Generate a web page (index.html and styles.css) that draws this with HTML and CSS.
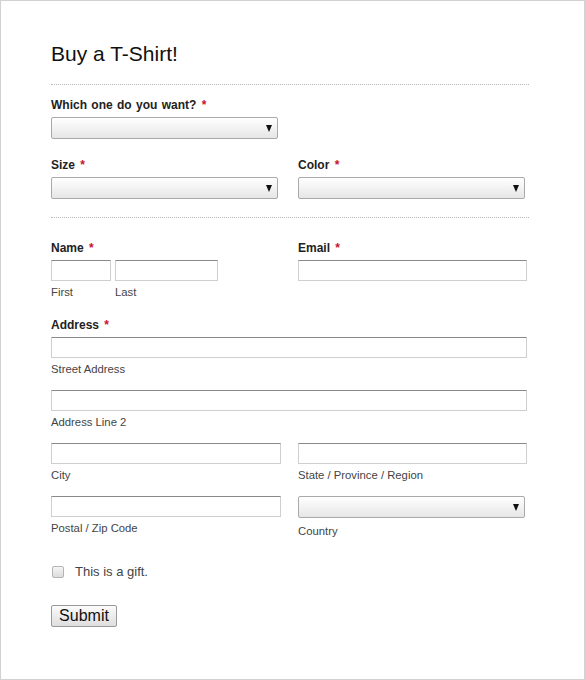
FILE: index.html
```html
<!DOCTYPE html>
<html>
<head>
<meta charset="utf-8">
<title>Buy a T-Shirt!</title>
<link rel="stylesheet" href="styles.css">
</head>
<body>
<div class="page">
  <h1 class="title">Buy a T-Shirt!</h1>
  <hr class="sep">

  <div class="field f-which">
    <label class="lbl">Which one do you want? <span class="req">*</span></label>
    <div class="select"><select><option></option></select></div>
  </div>

  <div class="grid f-size">
    <div class="field">
      <label class="lbl">Size <span class="req">*</span></label>
      <div class="select"><select><option></option></select></div>
    </div>
    <div class="field">
      <label class="lbl">Color <span class="req">*</span></label>
      <div class="select"><select><option></option></select></div>
    </div>
  </div>

  <hr class="sep sep2">

  <div class="grid f-name">
    <div class="field">
      <label class="lbl">Name <span class="req">*</span></label>
      <div class="name-row">
        <div class="sub-field">
          <input class="txt w-first" type="text">
          <span class="sub">First</span>
        </div>
        <div class="sub-field">
          <input class="txt w-last" type="text">
          <span class="sub">Last</span>
        </div>
      </div>
    </div>
    <div class="field">
      <label class="lbl">Email <span class="req">*</span></label>
      <input class="txt w-full" type="text">
    </div>
  </div>

  <div class="field f-address">
    <label class="lbl">Address <span class="req">*</span></label>
    <input class="txt w-wide" type="text">
    <span class="sub">Street Address</span>
  </div>

  <div class="field f-line2">
    <input class="txt w-wide" type="text">
    <span class="sub">Address Line 2</span>
  </div>

  <div class="grid f-city">
    <div class="field">
      <input class="txt w-full" type="text">
      <span class="sub">City</span>
    </div>
    <div class="field">
      <input class="txt w-full" type="text">
      <span class="sub">State / Province / Region</span>
    </div>
  </div>

  <div class="grid f-postal">
    <div class="field">
      <input class="txt w-full" type="text">
      <span class="sub">Postal / Zip Code</span>
    </div>
    <div class="field">
      <div class="select"><select><option></option></select></div>
      <span class="sub sub-country">Country</span>
    </div>
  </div>

  <label class="gift">
    <input class="check" type="checkbox">
    <span>This is a gift.</span>
  </label>

  <button class="submit" type="button">Submit</button>
</div>
</body>
</html>
```

FILE: styles.css
```css
html, body {
  margin: 0;
  padding: 0;
  background: #fff;
}

.page {
  box-sizing: border-box;
  width: 585px;
  height: 680px;
  border: 1px solid #d2d2d2;
  padding: 41px 0 0 50px;
  font-family: "Liberation Sans", Arial, sans-serif;
  color: #222;
}

.title {
  margin: 0;
  font-size: 21px;
  line-height: 23px;
  font-weight: normal;
  color: #111;
}

.sep {
  margin: 19px 0 0 0;
  width: 478px;
  height: 0;
  border: 0;
  border-top: 1px dotted #b8b8b8;
}

.sep2 {
  margin-top: 18px;
}

.field {
  display: flex;
  flex-direction: column;
  align-items: flex-start;
}

.lbl {
  display: block;
  font-size: 12px;
  line-height: 16px;
  font-weight: bold;
  word-spacing: 1px;
  color: #222;
  margin-bottom: 4px;
}

.req {
  color: #c8102e;
  margin-left: 1px;
}

.grid {
  display: grid;
  grid-template-columns: 230px 229px;
  column-gap: 17px;
  align-items: start;
}

.f-which { margin-top: 12px; }
.f-size { margin-top: 18px; }
.f-name { margin-top: 22px; }
.f-address { margin-top: 18px; }
.f-line2 { margin-top: 14px; }
.f-city { margin-top: 14px; }
.f-postal { margin-top: 14px; }

.select {
  position: relative;
  width: 227px;
  height: 22px;
}

.select select {
  -webkit-appearance: none;
  appearance: none;
  box-sizing: border-box;
  width: 227px;
  height: 22px;
  margin: 0;
  border: 1px solid #a9a9a9;
  border-radius: 2px;
  background: linear-gradient(#ffffff, #e6e6e6);
  font-family: inherit;
  font-size: 12px;
  outline: none;
}

.select::after {
  content: "";
  position: absolute;
  right: 6px;
  top: 8px;
  width: 0;
  height: 0;
  border-left: 3.5px solid transparent;
  border-right: 3.5px solid transparent;
  border-top: 7px solid #111;
  pointer-events: none;
}

.txt {
  box-sizing: border-box;
  height: 21px;
  margin: 0;
  padding: 0 3px;
  border: 1px solid #cfcfcf;
  border-top-color: #8a8a8a;
  border-radius: 0;
  background: #fff;
  font-family: inherit;
  font-size: 12px;
  outline: none;
}

.w-first { width: 60px; }
.w-last { width: 103px; }
.w-full { width: 229px; }
.grid .field:first-child .w-full { width: 230px; }
.w-wide { width: 476px; }

.name-row {
  display: flex;
  gap: 4px;
}

.sub-field {
  display: flex;
  flex-direction: column;
}

.sub {
  display: block;
  margin-top: 4px;
  font-size: 11.3px;
  line-height: 14px;
  color: #444;
}

.sub-country {
  margin-top: 6px;
}

.gift {
  display: flex;
  align-items: center;
  margin-top: 26px;
  height: 16px;
  font-size: 13px;
  line-height: 16px;
  color: #444;
}

.check {
  -webkit-appearance: none;
  appearance: none;
  box-sizing: border-box;
  width: 12px;
  height: 12px;
  margin: 0 11px 0 1px;
  border: 1px solid #b5b5b5;
  border-radius: 2px;
  background: linear-gradient(#f4f4f4, #dcdcdc);
}

.submit {
  display: block;
  box-sizing: border-box;
  margin-top: 25px;
  height: 22px;
  width: 66px;
  padding: 0;
  border: 1px solid #9a9a9a;
  border-radius: 2px;
  background: linear-gradient(#fbfbfb, #dedede);
  font-family: "Liberation Sans", Arial, sans-serif;
  font-size: 16px;
  line-height: 20px;
  color: #111;
}
```
